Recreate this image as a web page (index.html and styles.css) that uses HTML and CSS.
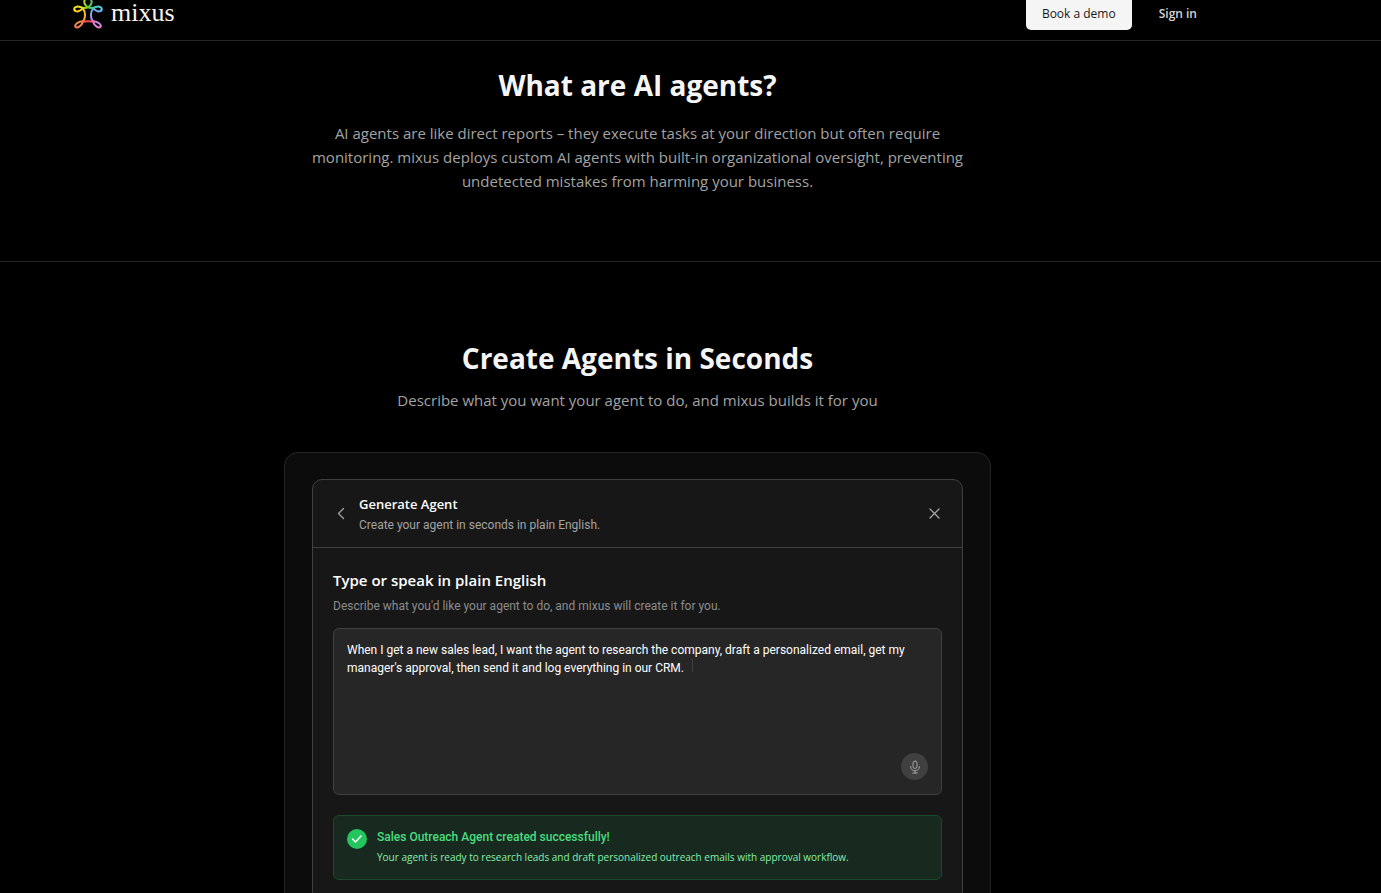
FILE: index.html
```html
<!DOCTYPE html>
<html lang="en">

<head>
    <meta charset="UTF-8">
    <meta name="viewport" content="width=device-width, initial-scale=1.0">
    <title>mixus</title>
    <link rel="stylesheet" href="styles.css">
</head>

<body>
    <header class="navbar">
        <a class="logo" href="#">
            <svg width="30" height="32" viewBox="40 -6 90 96" fill="none" stroke-width="6" stroke-linecap="round" stroke-linejoin="round">
                <defs>
                    <linearGradient id="top" gradientUnits="userSpaceOnUse" x1="42" y1="0" x2="128" y2="0">
                        <stop offset="0" stop-color="#fde01a" />
                        <stop offset="0.3" stop-color="#d4e02a" />
                        <stop offset="0.5" stop-color="#6cc82c" />
                        <stop offset="0.7" stop-color="#3cc8a0" />
                        <stop offset="1" stop-color="#5cc8fa" />
                    </linearGradient>
                    <linearGradient id="left" gradientUnits="userSpaceOnUse" x1="0" y1="32" x2="0" y2="88">
                        <stop offset="0" stop-color="#fdd01a" />
                        <stop offset="0.6" stop-color="#fa9a3c" />
                        <stop offset="1" stop-color="#f8785a" />
                    </linearGradient>
                    <linearGradient id="right" gradientUnits="userSpaceOnUse" x1="0" y1="32" x2="0" y2="88">
                        <stop offset="0" stop-color="#64b4fa" />
                        <stop offset="0.5" stop-color="#b88cf0" />
                        <stop offset="1" stop-color="#f07cd0" />
                    </linearGradient>
                    <linearGradient id="bottom" gradientUnits="userSpaceOnUse" x1="60" y1="0" x2="110" y2="0">
                        <stop offset="0" stop-color="#f87a50" />
                        <stop offset="0.5" stop-color="#f04858" />
                        <stop offset="1" stop-color="#f070c0" />
                    </linearGradient>
                </defs>
                <path stroke="url(#left)" d="M45 34C50 40 61 37 69 28C78 38 78 56 71 66C66 82 52 89 47 83C44 76 56 68 68 67" />
                <path stroke="url(#right)" d="M125 34C120 40 109 37 101 28C92 38 92 56 99 66C104 82 118 89 123 83C126 76 114 68 102 67" />
                <path stroke="url(#bottom)" d="M66 68C78 66 92 66 104 68" />
                <path stroke="url(#top)" d="M45 34C40 25 52 20 62 24C74 29 86 28 94 16C99 6 94 -2 85 -2C76 -2 71 6 76 16C84 28 96 29 108 24C118 20 130 25 125 34" />
            </svg>
            <span>mixus</span>
        </a>
        <nav class="nav-actions">
            <button class="btn-demo" type="button">Book a demo</button>
            <a class="sign-in" href="#">Sign in</a>
        </nav>
    </header>

    <main>
        <section class="intro">
            <h2>What are AI agents?</h2>
            <p>AI agents are like direct reports – they execute tasks at your direction but often require<br>
                monitoring. mixus deploys custom AI agents with built-in organizational oversight, preventing<br>
                undetected mistakes from harming your business.</p>
        </section>

        <section class="create">
            <h2>Create Agents in Seconds</h2>
            <p>Describe what you want your agent to do, and mixus builds it for you</p>

            <div class="demo">
                <div class="dialog">
                    <div class="dialog-head">
                        <button class="icon-btn" type="button" aria-label="Back">
                            <svg width="16" height="16" viewBox="0 0 16 16"><path d="M10.500 2.500L5.500 7.500L10.500 12.500" /></svg>
                        </button>
                        <div class="dialog-title">
                            <h3>Generate Agent</h3>
                            <p>Create your agent in seconds in plain English.</p>
                        </div>
                        <button class="icon-btn" type="button" aria-label="Close">
                            <svg width="16" height="16" viewBox="0 0 16 16"><path d="M4 3L13 12M13 3L4 12" /></svg>
                        </button>
                    </div>
                    <div class="dialog-body">
                        <label for="prompt">Type or speak in plain English</label>
                        <p class="hint">Describe what you'd like your agent to do, and mixus will create it for you.</p>
                        <div class="prompt-box">
                            <textarea id="prompt" spellcheck="false">When I get a new sales lead, I want the agent to research the company, draft a personalized email, get my manager's approval, then send it and log everything in our CRM.</textarea>
                            <span class="caret"></span>
                            <button class="mic" type="button" aria-label="Speak">
                                <svg width="14" height="14" viewBox="0 0 14 14"><rect x="5" y="1" width="4" height="7.500" rx="2" /><path d="M2.700 6.500V7C2.700 12 11.300 12 11.300 7V6.500M7 10.800V13M4.700 13H9.300" /></svg>
                            </button>
                        </div>
                        <div class="success">
                            <svg width="20" height="20" viewBox="0 0 20 20"><circle cx="10" cy="10" r="10" /><path d="M5.500 10L8.500 13L14 7" /></svg>
                            <div>
                                <strong>Sales Outreach Agent created successfully!</strong>
                                <p>Your agent is ready to research leads and draft personalized outreach emails with approval workflow.</p>
                            </div>
                        </div>
                    </div>
                </div>
            </div>
        </section>
    </main>
</body>

</html>
```
FILE: styles.css
```css
* {
    margin: 0;
    padding: 0;
    box-sizing: border-box;
}

body {
    background: #000;
    color: #f5f5f5;
    font-family: "Open Sans", "Noto Sans", sans-serif;
    overflow: hidden;
}

button,
textarea {
    font-family: inherit;
    border: 0;
}

button {
    cursor: pointer;
}

a {
    text-decoration: none;
}

/* navbar */
.navbar {
    display: flex;
    justify-content: space-between;
    align-items: center;
    height: 54px;
    margin-top: -13px;
    padding: 0 184px 1px 73px;
    border-bottom: 1px solid #262626;
}

.logo {
    display: flex;
    align-items: center;
    gap: 8px;
    color: #f5f5ee;
    font-family: "Liberation Serif", serif;
    font-size: 26px;
    line-height: 32px;
}

.nav-actions {
    display: flex;
    align-items: center;
    gap: 27px;
    font-size: 12px;
    font-weight: 600;
}

.btn-demo {
    height: 34px;
    padding: 0 16px;
    border-radius: 5px;
    background: #f5f5f5;
    color: #171717;
    font-size: 12px;
    font-weight: 500;
}

.sign-in {
    color: #d4d4d4;
}

/* sections */
.intro,
.create {
    padding-right: 106px;
    text-align: center;
}

.intro {
    height: 221px;
    padding-top: 24px;
    border-bottom: 1px solid #262626;
}

.create {
    padding-top: 76px;
}

h2 {
    font-size: 28px;
    font-weight: 700;
    line-height: 40px;
}

.intro > p,
.create > p {
    color: #a3a3a3;
    font-size: 15px;
    line-height: 24px;
}

.intro > p {
    margin-top: 16px;
}

.create > p {
    margin-top: 10px;
}

/* agent demo */
.demo {
    max-width: 707px;
    margin: 40px auto 0;
    padding: 26px 27px;
    border: 1px solid #262626;
    border-radius: 14px;
    background: #0c0c0c;
    text-align: left;
}

.dialog {
    border: 1px solid #404040;
    border-radius: 10px;
    background: #171717;
}

.dialog-head {
    display: flex;
    align-items: center;
    gap: 10px;
    height: 68px;
    padding: 0 20px;
    border-bottom: 1px solid #404040;
}

.dialog-title {
    flex: 1;
}

.dialog-title h3 {
    color: #fff;
    font-size: 13px;
    font-weight: 600;
    line-height: 22px;
}

.dialog-title p,
.hint {
    color: #a3a3a3;
    font-family: Roboto, sans-serif;
    font-size: 12px;
    line-height: 20px;
}

.icon-btn {
    width: 16px;
    height: 16px;
    background: none;
}

.icon-btn svg,
.mic svg {
    display: block;
    fill: none;
    stroke: #a3a3a3;
    stroke-width: 1.3;
    stroke-linecap: round;
    stroke-linejoin: round;
}

.dialog-body {
    padding: 20px;
}

.dialog-body label {
    display: block;
    color: #fff;
    font-size: 15px;
    font-weight: 600;
    line-height: 24px;
}

.hint {
    margin-top: 4px;
    color: #8c8c8c;
}

.prompt-box {
    position: relative;
    margin-top: 12px;
}

.prompt-box textarea {
    display: block;
    width: 100%;
    height: 167px;
    padding: 12px 13px;
    border: 1px solid #404040;
    border-radius: 6px;
    background: #262626;
    color: #fff;
    font-family: Roboto, sans-serif;
    font-size: 12px;
    line-height: 18px;
    resize: none;
}

.caret {
    position: absolute;
    top: 31px;
    left: 359px;
    width: 1px;
    height: 13px;
    background: #404040;
}

.mic {
    position: absolute;
    right: 14px;
    bottom: 15px;
    display: flex;
    justify-content: center;
    align-items: center;
    width: 27px;
    height: 27px;
    border-radius: 50%;
    background: #404040;
}

.mic svg {
    stroke-width: 1;
}

.success {
    display: flex;
    gap: 10px;
    height: 65px;
    margin-top: 20px;
    padding: 13px;
    border: 1px solid #184a2b;
    border-radius: 6px;
    background: #18291f;
}

.success svg {
    fill: #22c55e;
}

.success svg path {
    fill: none;
    stroke: #fff;
    stroke-width: 1.5;
    stroke-linecap: round;
    stroke-linejoin: round;
}

.success strong {
    display: block;
    color: #4ade80;
    font-family: Roboto, sans-serif;
    font-size: 12px;
    font-weight: 500;
    line-height: 16px;
}

.success p {
    margin-top: 4px;
    color: #86efac;
    font-size: 10px;
    line-height: 16px;
}
```
